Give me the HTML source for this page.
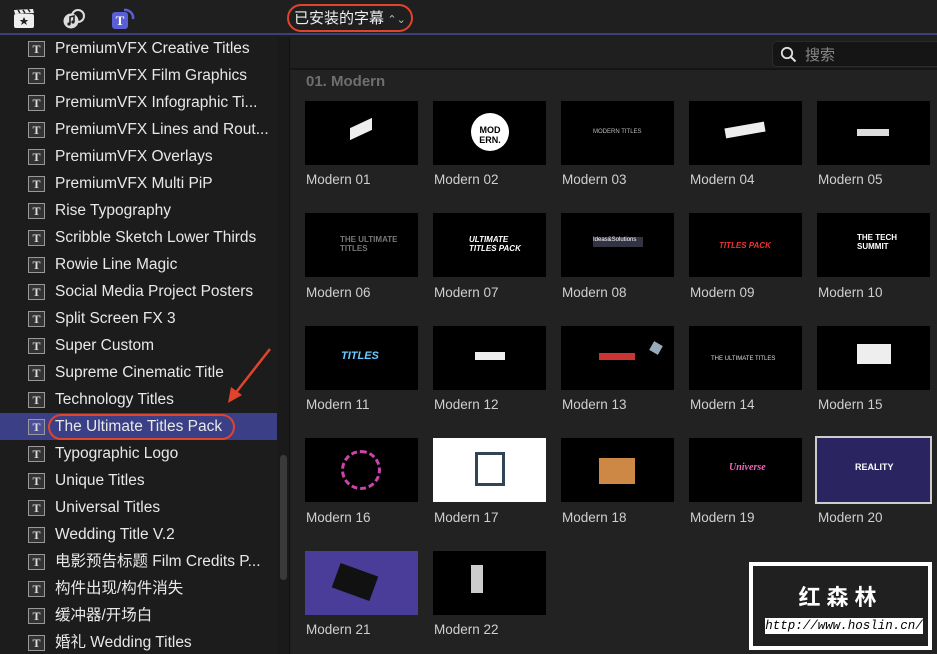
<!DOCTYPE html>
<html><head><meta charset="utf-8"><style>
*{margin:0;padding:0;box-sizing:border-box}
body{width:937px;height:654px;overflow:hidden;background:#1e1e1e;font-family:"Liberation Sans","Noto Sans CJK SC",sans-serif;position:relative;color:#e6e6e6}
.top{position:absolute;left:0;top:0;width:937px;height:35px;background:#1f1f1f;border-bottom:2px solid #3d3f78}
.side{position:absolute;left:0;top:37px;width:277px;height:617px;background:#1c1c1c;overflow:hidden}
.track{position:absolute;left:277px;top:37px;width:13px;height:617px;background:#1a1a1a;border-right:1px solid #111}
.thumbbar{position:absolute;left:280px;top:455px;width:7px;height:125px;background:#3a3a3a;border-radius:4px}
.row{position:absolute;left:0;width:277px;height:27px;font-size:15.5px;line-height:27px;color:#e8e8e8;white-space:nowrap}
.row .i{position:absolute;left:28px;top:6px;width:17px;height:16px;border:1px solid #999;background:#333;color:#ddd;font:bold 12px "Liberation Serif",serif;text-align:center;line-height:14px}
.row span.t{position:absolute;left:55px}
.sel{background:#3b3f86}
.main{position:absolute;left:291px;top:37px;width:646px;height:617px;background:#222}
.search{position:absolute;left:291px;top:37px;width:646px;height:33px;background:#1f1f1f;border-bottom:2px solid #151515}
.sbox{position:absolute;left:772px;top:41px;width:170px;height:26px;background:#151515;border-radius:5px;border:1px solid #2a2a2a}
.h{position:absolute;left:306px;top:73px;font-size:15px;font-weight:bold;color:#6f6f6f}
.th{position:absolute;width:113px;height:64px;background:#000;overflow:hidden}
.lb{position:absolute;font-size:13.5px;color:#cfcfcf}
</style></head><body>
<div class="top">
 <svg style="position:absolute;left:13px;top:8px" width="22" height="21" viewBox="0 0 22 21"><rect x="1" y="6" width="20" height="14" rx="2" fill="#eee"/><path d="M1 2l19-1 1 4-19 1z" fill="#eee"/><path d="M5 2l2 3M10 2l2 3M15 1l2 3" stroke="#222" stroke-width="1.5"/><path d="M11 9l1.3 3h3l-2.4 2 1 3-2.9-2-2.9 2 1-3-2.4-2h3z" fill="#222"/></svg>
 <svg style="position:absolute;left:62px;top:8px" width="24" height="22" viewBox="0 0 24 22"><circle cx="9" cy="13" r="7.5" fill="#ddd"/><circle cx="16" cy="8" r="6" fill="none" stroke="#ddd" stroke-width="2"/><path d="M8 16V9l4-1v6" stroke="#222" stroke-width="1.6" fill="none"/><circle cx="7" cy="16" r="1.6" fill="#222"/><circle cx="11" cy="14" r="1.6" fill="#222"/></svg>
 <svg style="position:absolute;left:111px;top:8px" width="24" height="22" viewBox="0 0 24 22"><rect x="1" y="4" width="16" height="17" rx="3" fill="#5a5fd6"/><path d="M13 2a8 8 0 0 1 9 9" stroke="#5a5fd6" stroke-width="2.5" fill="none"/><text x="9" y="17" font-family="Liberation Serif" font-size="13" font-weight="bold" fill="#fff" text-anchor="middle">T</text></svg>
 <div style="position:absolute;left:287px;top:4px;width:126px;height:28px;border:2px solid #e0442c;border-radius:14px;font-size:15px;line-height:24px;padding-left:5px;color:#eee;font-family:'Noto Sans CJK SC',sans-serif">已安装的字幕 <span style="font-size:11px;color:#bbb">⌃⌄</span></div>
</div>
<div class="side">
<div class="row" style="top:-2px"><div class="i">T</div><span class="t">PremiumVFX Creative Titles</span></div>
<div class="row" style="top:25px"><div class="i">T</div><span class="t">PremiumVFX Film Graphics</span></div>
<div class="row" style="top:52px"><div class="i">T</div><span class="t">PremiumVFX Infographic Ti...</span></div>
<div class="row" style="top:79px"><div class="i">T</div><span class="t">PremiumVFX Lines and Rout...</span></div>
<div class="row" style="top:106px"><div class="i">T</div><span class="t">PremiumVFX Overlays</span></div>
<div class="row" style="top:133px"><div class="i">T</div><span class="t">PremiumVFX Multi PiP</span></div>
<div class="row" style="top:160px"><div class="i">T</div><span class="t">Rise Typography</span></div>
<div class="row" style="top:187px"><div class="i">T</div><span class="t">Scribble Sketch Lower Thirds</span></div>
<div class="row" style="top:214px"><div class="i">T</div><span class="t">Rowie Line Magic</span></div>
<div class="row" style="top:241px"><div class="i">T</div><span class="t">Social Media Project Posters</span></div>
<div class="row" style="top:268px"><div class="i">T</div><span class="t">Split Screen FX 3</span></div>
<div class="row" style="top:295px"><div class="i">T</div><span class="t">Super Custom</span></div>
<div class="row" style="top:322px"><div class="i">T</div><span class="t">Supreme Cinematic Title</span></div>
<div class="row" style="top:349px"><div class="i">T</div><span class="t">Technology Titles</span></div>
<div class="row sel" style="top:376px"><div class="i" style="background:#4a4e96">T</div><span class="t">The Ultimate Titles Pack</span><div style="position:absolute;left:48px;top:1px;width:187px;height:26px;border:2px solid #e0442c;border-radius:13px"></div></div>
<div class="row" style="top:403px"><div class="i">T</div><span class="t">Typographic Logo</span></div>
<div class="row" style="top:430px"><div class="i">T</div><span class="t">Unique Titles</span></div>
<div class="row" style="top:457px"><div class="i">T</div><span class="t">Universal Titles</span></div>
<div class="row" style="top:484px"><div class="i">T</div><span class="t">Wedding Title V.2</span></div>
<div class="row" style="top:511px"><div class="i">T</div><span class="t">电影预告标题 Film Credits P...</span></div>
<div class="row" style="top:538px"><div class="i">T</div><span class="t">构件出现/构件消失</span></div>
<div class="row" style="top:565px"><div class="i">T</div><span class="t">缓冲器/开场白</span></div>
<div class="row" style="top:592px"><div class="i">T</div><span class="t">婚礼 Wedding Titles</span></div>
</div>
<div class="track"></div><div class="thumbbar"></div>
<svg style="position:absolute;left:222px;top:345px" width="52" height="60"><path d="M48 4L12 50" stroke="#e0442c" stroke-width="2.5"/><path d="M6 58l3-16 11 8z" fill="#e0442c"/></svg>
<div class="main"></div>
<div class="search"></div>
<div class="sbox"><svg style="position:absolute;left:7px;top:4px" width="17" height="17"><circle cx="7" cy="7" r="5.2" stroke="#ddd" stroke-width="1.8" fill="none"/><path d="M11 11l4.5 4.5" stroke="#ddd" stroke-width="2"/></svg><span style="position:absolute;left:32px;top:2px;font-size:15px;color:#888">搜索</span></div>
<div class="h">01. Modern</div>

<div class="th" style="left:305px;top:101px"><div style="position:absolute;left:45px;top:22px;width:22px;height:12px;background:#eee;transform:skewY(-25deg)"></div></div>
<div class="th" style="left:433px;top:101px"><div style="position:absolute;left:38px;top:12px;width:38px;height:38px;border-radius:50%;background:#fff;font:bold 9px sans-serif;color:#000;text-align:center;padding-top:12px">MOD<br>ERN.</div></div>
<div class="th" style="left:561px;top:101px"><div style="position:absolute;left:32px;top:28px;font-size:6px;color:#bbb">MODERN TITLES</div></div>
<div class="th" style="left:689px;top:101px"><div style="position:absolute;left:36px;top:24px;width:40px;height:10px;background:#eee;transform:rotate(-10deg)"></div></div>
<div class="th" style="left:817px;top:101px"><div style="position:absolute;left:40px;top:28px;width:32px;height:7px;background:#ddd"></div></div>

<div class="th" style="left:305px;top:213px"><div style="position:absolute;left:35px;top:22px;font:bold 8px sans-serif;color:#777">THE ULTIMATE<br>TITLES</div></div>
<div class="th" style="left:433px;top:213px"><div style="position:absolute;left:36px;top:22px;font:bold italic 8px sans-serif;color:#fff">ULTIMATE<br>TITLES PACK</div></div>
<div class="th" style="left:561px;top:213px"><div style="position:absolute;left:32px;top:24px;width:50px;height:10px;background:#334;color:#fff;font-size:6px">Ideas&amp;Solutions</div></div>
<div class="th" style="left:689px;top:213px"><div style="position:absolute;left:30px;top:28px;font:bold italic 8px sans-serif;color:#e33">TITLES PACK</div></div>
<div class="th" style="left:817px;top:213px"><div style="position:absolute;left:40px;top:20px;font:bold 8px sans-serif;color:#fff">THE TECH<br>SUMMIT</div></div>

<div class="th" style="left:305px;top:326px"><div style="position:absolute;left:36px;top:24px;font:bold italic 11px sans-serif;color:#6cf">TITLES</div></div>
<div class="th" style="left:433px;top:326px"><div style="position:absolute;left:42px;top:26px;width:30px;height:8px;background:#eee"></div></div>
<div class="th" style="left:561px;top:326px"><div style="position:absolute;left:38px;top:27px;width:36px;height:7px;background:#c33"></div><div style="position:absolute;left:90px;top:17px;width:10px;height:10px;background:#9ab;transform:rotate(30deg)"></div></div>
<div class="th" style="left:689px;top:326px"><div style="position:absolute;left:22px;top:30px;font-size:6px;color:#ddd">THE ULTIMATE TITLES</div></div>
<div class="th" style="left:817px;top:326px"><div style="position:absolute;left:40px;top:18px;width:34px;height:20px;background:#eee"></div></div>

<div class="th" style="left:305px;top:438px"><div style="position:absolute;left:36px;top:12px;width:40px;height:40px;border-radius:50%;border:3px dashed #c4a;"></div></div>
<div class="th" style="left:433px;top:438px;background:#fff"><div style="position:absolute;left:42px;top:14px;width:30px;height:34px;border:3px solid #345"></div></div>
<div class="th" style="left:561px;top:438px"><div style="position:absolute;left:38px;top:20px;width:36px;height:26px;background:#c84"></div></div>
<div class="th" style="left:689px;top:438px"><div style="position:absolute;left:40px;top:24px;font:italic bold 10px serif;color:#e6b">Universe</div></div>
<div class="th" style="left:817px;top:438px;background:#2a2560;outline:2px solid #ccc"><div style="position:absolute;left:38px;top:24px;font:bold 9px sans-serif;color:#fff">REALITY</div></div>

<div class="th" style="left:305px;top:551px;background:#4a3d99"><div style="position:absolute;left:30px;top:18px;width:40px;height:26px;background:#111;transform:rotate(20deg)"></div></div>
<div class="th" style="left:433px;top:551px"><div style="position:absolute;left:38px;top:14px;width:12px;height:28px;background:#ccc"></div></div>

<div class="lb" style="left:306px;top:172px">Modern 01</div><div class="lb" style="left:434px;top:172px">Modern 02</div><div class="lb" style="left:562px;top:172px">Modern 03</div><div class="lb" style="left:690px;top:172px">Modern 04</div><div class="lb" style="left:818px;top:172px">Modern 05</div>
<div class="lb" style="left:306px;top:285px">Modern 06</div><div class="lb" style="left:434px;top:285px">Modern 07</div><div class="lb" style="left:562px;top:285px">Modern 08</div><div class="lb" style="left:690px;top:285px">Modern 09</div><div class="lb" style="left:818px;top:285px">Modern 10</div>
<div class="lb" style="left:306px;top:397px">Modern 11</div><div class="lb" style="left:434px;top:397px">Modern 12</div><div class="lb" style="left:562px;top:397px">Modern 13</div><div class="lb" style="left:690px;top:397px">Modern 14</div><div class="lb" style="left:818px;top:397px">Modern 15</div>
<div class="lb" style="left:306px;top:510px">Modern 16</div><div class="lb" style="left:434px;top:510px">Modern 17</div><div class="lb" style="left:562px;top:510px">Modern 18</div><div class="lb" style="left:690px;top:510px">Modern 19</div><div class="lb" style="left:818px;top:510px">Modern 20</div>
<div class="lb" style="left:306px;top:622px">Modern 21</div><div class="lb" style="left:434px;top:622px">Modern 22</div>

<div style="position:absolute;left:749px;top:562px;width:183px;height:88px;background:#202020;border:4px solid #fff">
 <div style="position:absolute;left:0;top:14px;width:175px;text-align:center;font:bold 22px 'Noto Sans CJK SC',sans-serif;color:#fff;letter-spacing:6px">红森林</div>
 <div style="position:absolute;left:12px;top:52px;width:158px;height:16px;background:#fff;color:#000;font:italic 12.5px 'Liberation Mono',monospace;text-align:center;line-height:16px">http://www.hoslin.cn/</div>
</div>
</body></html>
